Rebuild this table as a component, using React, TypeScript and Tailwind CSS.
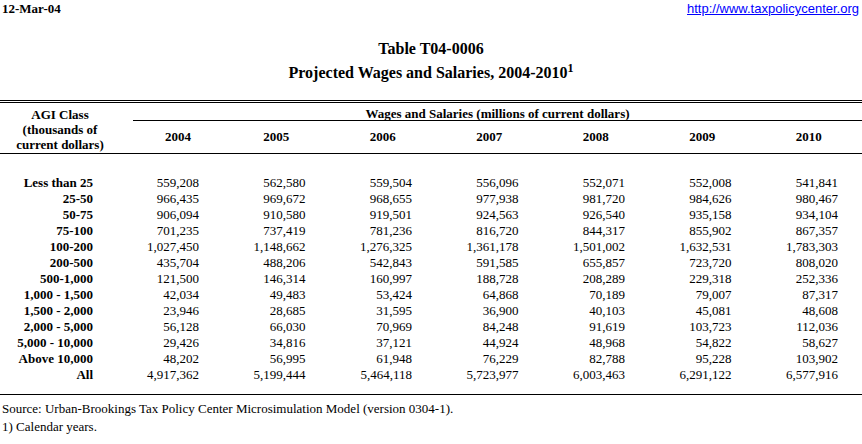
import React from "react";

const rows: string[][] = [
  ["Less than 25", "559,208", "562,580", "559,504", "556,096", "552,071", "552,008", "541,841"],
  ["25-50", "966,435", "969,672", "968,655", "977,938", "981,720", "984,626", "980,467"],
  ["50-75", "906,094", "910,580", "919,501", "924,563", "926,540", "935,158", "934,104"],
  ["75-100", "701,235", "737,419", "781,236", "816,720", "844,317", "855,902", "867,357"],
  ["100-200", "1,027,450", "1,148,662", "1,276,325", "1,361,178", "1,501,002", "1,632,531", "1,783,303"],
  ["200-500", "435,704", "488,206", "542,843", "591,585", "655,857", "723,720", "808,020"],
  ["500-1,000", "121,500", "146,314", "160,997", "188,728", "208,289", "229,318", "252,336"],
  ["1,000 - 1,500", "42,034", "49,483", "53,424", "64,868", "70,189", "79,007", "87,317"],
  ["1,500 - 2,000", "23,946", "28,685", "31,595", "36,900", "40,103", "45,081", "48,608"],
  ["2,000 - 5,000", "56,128", "66,030", "70,969", "84,248", "91,619", "103,723", "112,036"],
  ["5,000 - 10,000", "29,426", "34,816", "37,121", "44,924", "48,968", "54,822", "58,627"],
  ["Above 10,000", "48,202", "56,995", "61,948", "76,229", "82,788", "95,228", "103,902"],
  ["All", "4,917,362", "5,199,444", "5,464,118", "5,723,977", "6,003,463", "6,291,122", "6,577,916"],
];

const years = ["2004", "2005", "2006", "2007", "2008", "2009", "2010"];

export default function App() {
  return (
    <div className="w-[862px] h-[444px] bg-white text-black font-['Liberation_Serif','Times_New_Roman',serif] text-[13px] leading-[16px] overflow-hidden">
      <div className="flex justify-between items-start h-[17px] pt-[1px]">
        <span className="font-bold pl-[2px]">12-Mar-04</span>
        <a
          href="#"
          className="font-['Liberation_Sans',Arial,sans-serif] text-[13px] leading-[16px] text-[#0000ff] underline pr-[3px]"
        >
          http://www.taxpolicycenter.org
        </a>
      </div>

      <div className="flex flex-col items-center pt-[20px] font-bold text-[16px] leading-[24px]">
        <div>Table T04-0006</div>
        <div>
          Projected Wages and Salaries, 2004-2010<sup className="text-[12px]">1</sup>
        </div>
      </div>

      <div className="mt-[15px] border-t-[3px] border-double border-black grid grid-cols-[133px_90px_repeat(6,1fr)] font-bold">
        <div className="row-span-2 flex flex-col items-center justify-center pr-[13px] text-center leading-[15px] pt-[3px]">
          <span>AGI Class</span>
          <span>(thousands of</span>
          <span>current dollars)</span>
        </div>
        <div className="col-span-7 h-[18px] border-b border-black text-center leading-[15px] pt-[3px]">
          Wages and Salaries (millions of current dollars)
        </div>
        {years.map((y) => (
          <div key={y} className="h-[32px] flex items-center justify-center">
            {y}
          </div>
        ))}
        <div className="col-span-8 border-b border-black"></div>
      </div>

      <div className="pt-[21px] grid grid-cols-[133px_90px_repeat(6,1fr)]">
        {rows.map((r) => (
          <React.Fragment key={r[0]}>
            <div className="font-bold text-right pr-[40px] h-[16px] whitespace-nowrap">{r[0]}</div>
            {r.slice(1).map((v, i) => (
              <div key={i} className="text-right pr-[24px] h-[16px]">
                {v}
              </div>
            ))}
          </React.Fragment>
        ))}
      </div>

      <div className="mt-[11px] border-t border-black pt-[5px] leading-[18px]">
        <div className="pl-[2px]">Source: Urban-Brookings Tax Policy Center Microsimulation Model (version 0304-1).</div>
        <div className="pl-[2px]">1) Calendar years.</div>
      </div>
    </div>
  );
}
